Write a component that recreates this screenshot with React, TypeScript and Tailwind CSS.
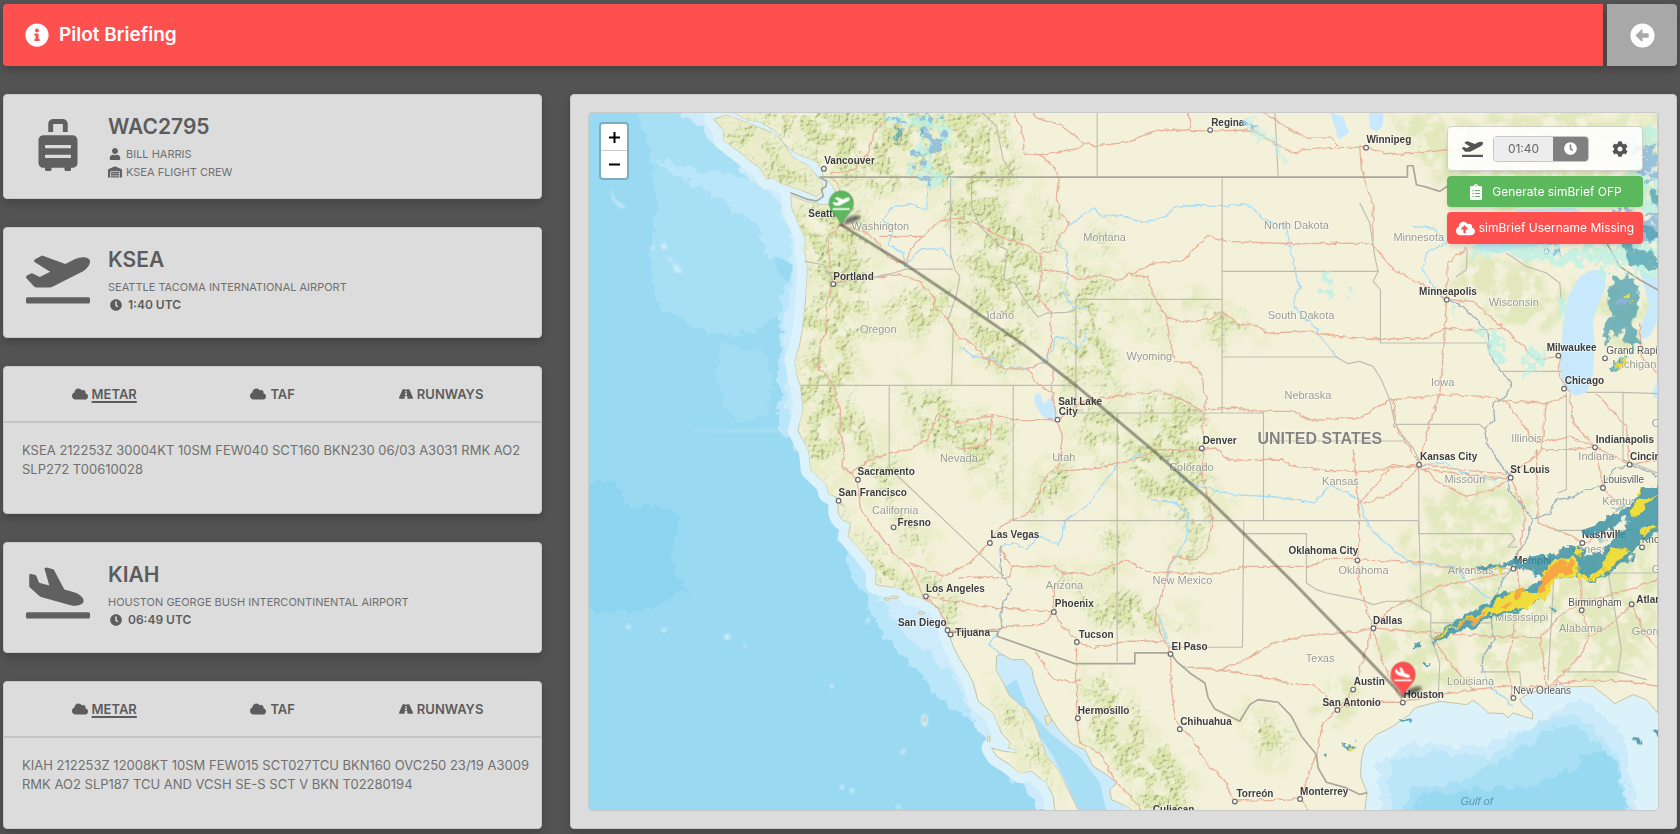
import { useState } from 'react';
import type { ReactNode } from 'react';
import {
  FaArrowAltCircleLeft,
  FaClipboardList,
  FaClock,
  FaCloud,
  FaCloudUploadAlt,
  FaCog,
  FaInfoCircle,
  FaPlaneArrival,
  FaPlaneDeparture,
  FaRoad,
  FaSuitcaseRolling,
  FaUser,
  FaWarehouse,
} from 'react-icons/fa';

// Map drawing units: three to a pixel, window below.
const MAP_VIEW = '87 67 3207 2097';

const LAND =
  'M520 67L560 90 600 96 655 130 670 160 700 185 730 200 770 215 785 240 792 262 815 285 832 315 822 345 790 345 740 336 693 318 697 360 715 400 738 450 732 478 742 520 742 560 736 640 728 720 718 770 705 812 712 860 722 890 730 960 714 1022 745 1080 750 1110 752 1140 800 1185 805 1210 832 1225 858 1255 835 1240 835 1270 848 1292 872 1300 865 1340 910 1390 947 1440 948 1484 960 1488 1020 1495 1050 1517 1085 1525 1130 1550 1155 1590 1165 1625 1180 1670 1200 1710 1225 1750 1240 1780 1255 1835 1300 1870 1325 1930 1352 1960 1345 1975 1368 1978 1370 1990 1330 1985 1295 1975 1310 2000 1350 2025 1380 2050 1415 2045 1460 2080 1480 2120 1485 2164L1557 2164 1525 2100 1495 2040 1460 2000 1435 1930 1415 1880 1385 1850 1350 1820 1325 1770 1308 1740 1310 1700 1325 1693 1355 1710 1390 1710 1415 1735 1422 1770 1440 1820 1470 1880 1500 1925 1540 1965 1575 1980 1600 2030 1640 2055 1672 2080 1650 2100 1655 2130 1700 2150 1720 2164L2415 2164 2422 2110 2402 2060 2405 2010 2415 1970 2450 1935 2500 1910 2550 1875 2562 1858 2575 1852 2640 1835 2720 1845 2740 1832 2765 1850 2785 1870 2830 1872 2845 1885 2860 1870 2890 1880 2918 1888 2918 1868 2890 1845 2880 1830 2905 1812 2930 1805 2990 1790 2992 1770 3010 1792 3100 1790 3140 1820 3165 1842 3220 1815 3260 1830 3294 1870V67Z';
const ISLAND =
  'M462 88L500 76 560 98 640 130 668 155 700 205 745 228 785 275 790 300 770 320 715 298 662 280 640 265 620 268 600 235 560 205 530 180 490 150 492 125Z';
const LAKES = [
  'M3060 560L3100 540 3140 545 3135 600 3110 660 3098 700 3105 760 3100 850 3082 908 3045 920 3008 892 3000 830 3006 760 3010 700 3025 620Z',
  'M2730 475L2800 440 2870 360 3040 355 3180 420 3160 465 3000 460 2860 478 2820 492Z',
  'M2428 67H2472L2468 110 2450 125 2430 115Z',
  'M2310 67L2350 80 2368 130 2335 150 2325 110Z',
  'M3240 540L3294 570V690L3270 740 3245 750 3243 710 3268 650Z',
  'M1424 915L1440 910 1452 945 1468 925 1482 930 1492 982 1470 996 1444 975 1424 940Z',
  'M3294 870L3278 910 3284 925 3294 925Z',
];

// High forest and range areas, drawn through the relief filter.
const RANGES = [
  'M520 60L820 60 1350 60 1350 180 1380 260 1330 330 1380 420 1450 500 1470 600 1450 660 1390 640 1340 560 1310 640 1270 740 1220 700 1230 540 1160 400 1120 260 1060 250 990 330 940 300 860 290 780 220 640 110Z',
  'M465 85L560 100 690 210 780 310 660 275 560 205Z',
  'M690 320L800 360 920 380 940 480 910 600 930 720 880 800 860 900 800 970 710 960 715 860 740 700 760 600 735 500Z',
  'M720 880L850 930 930 1010 1010 1100 990 1220 900 1120 840 1060 820 1200 745 1130Z',
  'M965 1170L1040 1240 1120 1380 1100 1430 1030 1350Z',
  'M840 1240L940 1380 1040 1440 1070 1520 950 1490 890 1360Z',
  'M1040 1440L1160 1500 1200 1620 1120 1550Z',
  'M960 660L1060 600 1180 600 1150 700 1040 740Z',
  'M1230 560L1340 570 1410 680 1430 780 1330 860 1230 780Z',
  'M1540 600L1630 600 1660 700 1640 780 1700 920 1640 910 1590 840 1590 980 1530 960 1500 760 1540 700Z',
  'M1700 590L1790 640 1830 730 1790 780 1740 680Z',
  'M1930 640L2030 670 2050 720 2010 790 1950 720Z',
  'M1760 940L1880 900 1930 1010 1940 1130 1970 1200 1950 1330 1900 1420 1850 1400 1860 1290 1780 1260 1690 1200 1690 1060Z',
  'M1550 990L1680 970 1720 1060 1600 1110Z',
  'M1390 1250L1470 1150 1520 1090 1510 1210 1420 1290Z',
  'M1480 1440L1620 1490 1730 1520 1800 1600 1700 1640 1600 1590Z',
  'M1870 1530L1910 1550 1910 1630 1860 1630Z',
  'M1580 1740L1700 1810 1770 1950 1860 2000 1910 2170 1750 2170 1660 2010 1600 1930Z',
  'M2070 1880L2160 1890 2180 2010 2110 2010Z',
  'M1590 420L1660 410 1650 480 1580 470Z',
  'M1300 1780L1340 1840 1400 1910 1450 2000 1500 2120 1430 2050 1370 1970 1320 1880Z',
  'M1440 300L1480 360 1480 480 1420 440Z',
  'M1480 600L1560 520 1700 600 1560 640Z',
  'M1650 1290L1700 1300 1690 1440 1630 1430Z',
  'M1040 880L1100 920 1340 1000 1340 1250 1200 1100 1060 1020Z',
];
const FORESTS = [
  'M2480 67L3294 67 3294 300 3160 330 2800 340 2660 290 2560 260Z',
  'M2700 530L2900 500 3000 560 3000 690 2920 760 2820 700 2700 640Z',
  'M3120 660L3180 600 3260 640 3240 780 3130 760Z',
  'M2620 1210L2800 1170 2880 1230 2870 1330 2700 1330 2580 1260Z',
  'M2560 1330L2840 1360 2820 1500 2760 1620 2600 1680 2560 1500Z',
  'M2820 1500L2990 1450 3180 1350 3294 1320 3294 1680 3180 1760 2960 1750 2780 1740 2760 1600Z',
  'M2480 1600L2620 1640 2740 1760 2620 1820 2520 1740Z',
  'M2260 1810L2420 1780 2440 1840 2260 1860Z',
  'M1800 600L1900 590 1960 660 1860 650Z',
];

const BORDERS = [
  'M1172 262V490L1185 540 1200 560 1188 620 1165 690 1180 720 1175 887',
  'M735 515L790 525 812 560 820 582 870 572 945 562 1000 550 1040 538H1178',
  'M722 887H1550M988 887V1135L1325 1455M1360 887V1293M1672 970V1715',
  'M1548 970V629H1987M1548 970H2110M1987 262V970M1612 67V258M2145 67L2155 258',
  'M1987 545H2455M1987 802H2330L2365 822 2400 815 2440 830 2465 870 2490 930 2505 1000 2530 1040 2560 1075 2577 1110V1332',
  'M2111 970V1293M2111 1054H2530M1360 1293H2577L2585 1555 2613 1570V1640L2640 1720 2635 1830',
  'M2052 1293L2048 1673H1832M2052 1332H2240V1480L2270 1500 2300 1510 2340 1518 2400 1530 2440 1545 2480 1535 2550 1535 2590 1555',
  'M2577 1332H2855L2865 1350 2845 1372H2872M2613 1600H2790M2765 1747H2880L2885 1800',
  'M2400 340L2430 400 2445 500 2455 545 2440 575 2462 600V760H2785M2830 845H3005M3020 910V1200L2995 1210M3190 908V1110L3294 1150M3080 908H3190L3294 912M2510 1004H2760L2775 1018',
  'M2983 1390V1450L2965 1770M3145 1450L3165 1560 3185 1680 3175 1747M3015 1747H3175L3260 1770M2920 1450H3294M2985 1322H3200L3294 1315',
  'M1235 265V350L1260 410 1320 470 1342 480 1332 570 1365 580 1400 640 1435 682 1460 670 1520 668 1548 660M1265 67L1310 110 1330 210 1360 258',
  'M2690 560L2720 540 2722 480M2840 490L2900 530 2960 550 3000 580 3005 630',
];
const RIVER_BORDERS = [
  'M2660 630L2710 650 2750 690 2785 730 2790 790 2810 830 2855 880 2840 920 2800 940 2805 990 2775 1020 2780 1060 2820 1120 2850 1160 2845 1200 2890 1250 2918 1290 2905 1340 2880 1385 2855 1430 2820 1490 2800 1540 2795 1600 2803 1650 2770 1700 2765 1747',
  'M2918 1290L2970 1270 2990 1230 3040 1222 3080 1200 3130 1190 3160 1140 3220 1125 3294 1160',
  'M1320 1370L1325 1450 1355 1500 1330 1540 1320 1580 1330 1610 1315 1625',
];
const FRONTIERS = [
  'M780 262L800 275 798 290 785 298 790 320 770 334 740 328 693 310M780 262H2543V228L2560 228 2570 285 2600 292 2640 305 2665 288',
  'M1165 1632L1200 1625H1315L1312 1640 1545 1722H1725V1690H1832L1850 1715 1890 1750 1935 1780 1945 1825 1965 1858 2040 1895 2055 1870 2070 1845 2095 1830 2155 1838 2195 1880 2225 1940 2270 1995 2275 2035 2300 2078 2360 2095 2400 2115 2420 2110',
  'M3130 440L3180 530 3240 570 3294 600',
];
const ROADS = [
  'M815 262L840 300 848 405 805 440 805 500 818 580 800 640 798 730 780 760 778 840 800 855 822 890 828 930 842 960 840 1020 850 1080 850 1130 870 1150 895 1170 900 1250 930 1300 1010 1400 1050 1430 1090 1520 1140 1560 1165 1625',
  'M815 252L880 242 925 190 940 140 965 100 985 90',
  'M848 405L920 430 955 460 990 510 1040 520 1050 480 1090 438 1145 390 1200 385 1250 400 1320 440 1380 460 1440 490 1490 485 1490 450 1530 405 1500 370 1492 330 1498 270 1480 230 1440 195 1395 190 1385 120 1362 67',
  'M960 440H1090M820 580L945 562 1020 555 1080 575 1120 620 1125 650 1165 690 1200 750 1230 755 1270 800 1340 838 1400 838 1460 815 1475 760 1472 670 1435 620 1445 540 1440 490',
  'M1440 195L1560 175 1572 160 1500 105 1425 80 1420 67M1572 160L1610 168 1700 158 1780 125 1830 120 1955 124 2080 120 2100 135 2195 188 2260 175 2400 172 2420 175 2500 195 2600 188 2660 180M1892 124V90L1880 67M2110 67L2160 100 2240 145 2320 145 2335 165',
  'M1445 540L1520 548 1555 570 1620 555 1670 573 1780 520 1870 512 1900 480 1945 437 2000 455 2200 462 2400 460 2440 465 2500 540 2560 570 2620 600 2660 630 2740 635 2790 680 2850 730 2900 780 2930 810 3000 800 2995 850 3030 910',
  'M1715 555L1765 562 1785 630 1820 680 1870 698 1950 690 1985 668 2040 705 2090 708 2130 730 2240 725 2330 740 2400 745 2500 748 2600 745 2660 715 2730 722 2830 715M1820 685L1830 750 1845 815 1890 820 1925 850 1928 900 1940 920 1930 1000 1928 1160 1960 1290 1940 1380 1912 1410 1840 1400 1800 1530 1785 1590 1805 1630 1832 1690 1835 1800 1845 1880 1860 1915 1900 1950 1940 2020 2000 2080 2020 2135 2120 2130 2220 2128',
  'M1200 1078L1260 1070 1290 1050 1300 975 1360 990 1495 990 1560 940 1600 930 1700 915 1800 905 1860 925 1920 962 2020 955 2110 965 2200 965 2260 995 2340 985 2400 985 2450 950 2500 930 2640 915 2780 920 2850 935 2960 940 3020 920',
  'M870 1150L930 1110 990 1092 1050 1080 1100 1050 1135 970 1170 990 1200 1000 1300 975',
  'M1480 840L1475 900 1492 990 1510 1050 1495 1130 1450 1170 1440 1210 1410 1270 1320 1310 1290 1360 1230 1420 1150 1460 1050 1420M1400 838L1440 890 1480 910M1500 1145L1620 1135 1670 1120 1720 1110 1800 1080 1925 1080 1970 1075 2005 1112 2170 1108 2190 1128 2300 1142 2420 1145 2578 1125 2700 1140 2850 1155 2950 1080 3030 1080 3106 1072 3210 1125 3294 1110',
  'M1200 1465L1260 1462 1350 1465 1355 1432 1480 1430 1510 1450 1600 1455 1700 1410 1760 1445 1840 1450 1980 1450 2060 1430 2250 1430 2300 1408 2394 1410 2600 1420 2700 1440 2860 1435 2960 1440 3120 1330 3180 1250 3130 1195',
  'M1320 1370L1355 1432M1085 1520L1200 1535 1260 1550 1440 1565 1482 1566 1510 1610 1560 1660 1600 1675 1700 1655 1810 1655M1482 1566L1480 1500 1510 1460M1165 1625L1280 1622 1400 1605 1450 1605 1482 1566M1550 1660L1550 1880 1560 1960 1620 1990 1670 2080 1720 2130 1745 2164M1430 1690L1475 1765 1540 1780 1560 1770',
  'M1870 1730L1980 1742 2060 1710 2140 1660 2240 1638 2400 1625 2440 1615 2500 1550 2580 1520 2640 1490 2840 1450M1980 1742L2100 1760 2200 1785 2260 1785 2300 1820 2333 1860 2290 1900 2270 1990 2220 2128 2250 2164M2333 1860L2380 1800 2400 1740 2440 1615 2550 1625 2680 1632 2800 1640 2940 1645 3000 1580 3060 1540 3180 1510 3294 1470',
  'M2333 1860L2400 1838 2529 1838 2640 1815 2740 1800 2830 1790 2860 1795 2960 1790 3080 1770 3200 1775 3294 1790M2440 1615L2470 1720 2500 1780 2529 1838M2613 1640L2680 1730 2740 1800M2860 1650L2840 1720 2860 1825M3065 1560L3090 1640 3060 1700 2980 1780M2940 1645L2960 1790',
  'M2578 1125L2640 1180 2720 1220 2800 1200 2853 1165 2890 1250 2895 1300 2870 1430 2880 1500 2860 1640M2930 1080L2935 1300 3040 1340 3068 1360 3060 1450 3066 1560M2853 1165L2760 1160 2500 1125 2400 1240M2380 1080L2400 1280 2394 1410 2400 1500 2440 1615',
  'M2400 172L2405 240 2440 350 2440 450M2660 630L2665 520 2720 475M2660 630L2655 740 2640 915 2610 1000 2578 1125M3030 910L3040 1000 3106 1072M3110 910L3200 1010 3210 1125M3240 700L3245 800 3294 850M2960 940L2945 1080M3106 1072L3130 1195M2835 930L2930 1060 3030 1040 3106 1072',
  'M2500 930L2505 1010 2560 1090 2578 1125M3216 1544L3260 1640 3294 1680M3216 1544L3160 1600 3090 1640M2415 1240L2500 1210 2580 1130',
];
const RIVERS = [
  'M1530 405L1600 355 1625 380 1680 375 1750 398 1820 380 1845 350 1900 348 1990 350 2050 342 2080 355 2110 390 2180 410 2190 460 2205 540 2220 590 2200 650 2240 690 2275 720 2280 740 2330 800',
  'M1490 450L1520 490 1525 550 1510 610 1540 650 1580 655M1200 770L1240 800 1310 810 1340 838 1430 830 1480 780 1485 740 1520 745 1555 780 1580 730',
  'M970 390L1000 350 1060 345 1100 360 1105 280M970 390L1000 420 985 465 1030 490 1035 530 1080 480 1145 475 1175 510',
  'M1750 1090L1680 1120 1640 1170 1580 1250 1520 1290 1495 1365 1440 1340 1400 1380 1360 1360 1320 1370M1775 1230L1850 1240 1882 1270 1880 1350 1840 1410 1810 1500 1790 1560 1832 1680',
  'M1840 1130L1880 1175 1960 1200 2020 1215 2150 1222 2265 1240 2310 1185 2400 1230 2425 1310 2500 1380 2560 1425 2680 1430 2730 1480 2790 1530',
  'M2578 1125L2660 1120 2710 1150 2790 1170 2850 1160M2560 410L2620 415 2660 460 2600 490 2590 540 2620 590 2660 630M1315 1625L1288 1665 1325 1695M2770 1747L2800 1800 2860 1850',
];

const CITIES = [
  { name: 'Vancouver', x: 793, y: 223, dx: 792, dy: 237 },
  { name: 'Seattle', x: 745, y: 381 },
  { name: 'Portland', x: 820, y: 570, dx: 820, dy: 583 },
  { name: 'Sacramento', x: 893, y: 1156, dx: 894, dy: 1170 },
  { name: 'San Francisco', x: 836, y: 1219, dx: 836, dy: 1233 },
  { name: 'Fresno', x: 1013, y: 1308, dx: 1001, dy: 1313 },
  { name: 'Los Angeles', x: 1098, y: 1506, dx: 1098, dy: 1520 },
  { name: 'San Diego', x: 1014, y: 1608, dx: 1163, dy: 1622 },
  { name: 'Tijuana', x: 1186, y: 1639, dx: 1172, dy: 1635 },
  { name: 'Las Vegas', x: 1292, y: 1346, dx: 1290, dy: 1360 },
  { name: 'Phoenix', x: 1485, y: 1553, dx: 1482, dy: 1567 },
  { name: 'Tucson', x: 1557, y: 1644, dx: 1551, dy: 1657 },
  { name: 'El Paso', x: 1835, y: 1680, dx: 1832, dy: 1693 },
  { name: 'Hermosillo', x: 1554, y: 1872, dx: 1554, dy: 1886 },
  { name: 'Chihuahua', x: 1861, y: 1906, dx: 1860, dy: 1919 },
  { name: 'Torreón', x: 2030, y: 2123, dx: 2025, dy: 2136 },
  { name: 'Monterrey', x: 2221, y: 2115, dx: 2221, dy: 2128 },
  { name: 'Culiacan', x: 1779, y: 2171 },
  { name: 'Regina', x: 1954, y: 108, dx: 1951, dy: 121 },
  { name: 'Salt Lake', x: 1495, y: 947 },
  { name: 'City', x: 1497, y: 977, dx: 1493, dy: 990 },
  { name: 'Denver', x: 1929, y: 1063, dx: 1926, dy: 1076 },
  { name: 'Oklahoma City', x: 2186, y: 1393, dx: 2393, dy: 1412 },
  { name: 'Winnipeg', x: 2420, y: 161, dx: 2419, dy: 174 },
  { name: 'Minneapolis', x: 2578, y: 617, dx: 2661, dy: 630 },
  { name: 'Milwaukee', x: 2961, y: 784, dx: 2996, dy: 798 },
  { name: 'Chicago', x: 3015, y: 884, dx: 3013, dy: 897 },
  { name: 'Indianapolis', x: 3108, y: 1060, dx: 3106, dy: 1073 },
  { name: 'Cincinnati', x: 3211, y: 1112, dx: 3210, dy: 1125 },
  { name: 'Kansas City', x: 2581, y: 1112, dx: 2578, dy: 1125 },
  { name: 'St Louis', x: 2852, y: 1151, dx: 2853, dy: 1164 },
  { name: 'Nashville', x: 3067, y: 1346, dx: 3068, dy: 1360 },
  { name: 'Memphis', x: 2863, y: 1423, dx: 2861, dy: 1437 },
  { name: 'Dallas', x: 2440, y: 1603, dx: 2441, dy: 1616 },
  { name: 'Atlanta', x: 3230, y: 1540, dx: 3216, dy: 1544 },
  { name: 'Austin', x: 2382, y: 1787, dx: 2380, dy: 1800 },
  { name: 'San Antonio', x: 2288, y: 1848, dx: 2333, dy: 1861 },
  { name: 'Houston', x: 2531, y: 1826, dx: 2529, dy: 1839 },
];
const TOWNS = [
  { name: 'Grand Rapids', x: 3140, y: 793, dx: 3136, dy: 806 },
  { name: 'Louisville', x: 3130, y: 1181, dx: 3130, dy: 1195 },
  { name: 'Knoxville', x: 3246, y: 1360, dx: 3247, dy: 1373 },
  { name: 'Birmingham', x: 3026, y: 1548, dx: 3066, dy: 1562 },
  { name: 'New Orleans', x: 2861, y: 1812, dx: 2861, dy: 1825 },
];
const STATES = [
  { name: 'Washington', x: 875, y: 422 },
  { name: 'Oregon', x: 900, y: 730 },
  { name: 'Idaho', x: 1280, y: 687 },
  { name: 'Montana', x: 1570, y: 453 },
  { name: 'Wyoming', x: 1700, y: 811 },
  { name: 'North Dakota', x: 2113, y: 417 },
  { name: 'South Dakota', x: 2124, y: 687 },
  { name: 'Nebraska', x: 2174, y: 929 },
  { name: 'Nevada', x: 1140, y: 1118 },
  { name: 'Utah', x: 1477, y: 1113 },
  { name: 'Colorado', x: 1828, y: 1143 },
  { name: 'Kansas', x: 2287, y: 1187 },
  { name: 'California', x: 936, y: 1273 },
  { name: 'Arizona', x: 1458, y: 1499 },
  { name: 'New Mexico', x: 1778, y: 1483 },
  { name: 'Oklahoma', x: 2336, y: 1452 },
  { name: 'Texas', x: 2238, y: 1717 },
  { name: 'Minnesota', x: 2501, y: 455 },
  { name: 'Wisconsin', x: 2787, y: 648 },
  { name: 'Iowa', x: 2614, y: 890 },
  { name: 'Michigan', x: 3158, y: 835 },
  { name: 'Illinois', x: 2855, y: 1058 },
  { name: 'Indiana', x: 3056, y: 1111 },
  { name: 'Ohio', x: 3276, y: 1013 },
  { name: 'Missouri', x: 2654, y: 1179 },
  { name: 'Kentucky', x: 3128, y: 1245 },
  { name: 'Tennessee', x: 3020, y: 1391 },
  { name: 'Arkansas', x: 2664, y: 1452 },
  { name: 'Mississippi', x: 2806, y: 1593 },
  { name: 'Alabama', x: 2998, y: 1626 },
  { name: 'Georgia', x: 3216, y: 1637 },
  { name: 'Louisiana', x: 2662, y: 1785 },
  { name: 'Great', x: 3276, y: 1450 },
];

interface LabelProps {
  name: string;
  x: number;
  y: number;
  dx?: number;
  dy?: number;
}

function CityLabel({ name, x, y, dx, dy, bold }: LabelProps & { bold?: boolean }) {
  return (
    <g>
      {dx !== undefined && <circle cx={dx} cy={dy} r="7" fill="#fff" stroke="#666" strokeWidth="3.5" />}
      <text
        x={x}
        y={y}
        fontSize="30"
        fontWeight={bold ? 700 : 400}
        fill={bold ? '#3c3c3c' : '#555'}
        stroke="#fff"
        strokeOpacity="0.55"
        strokeWidth="5"
        paintOrder="stroke"
      >
        {name}
      </text>
    </g>
  );
}

function Pin({ x, y, color, children }: { x: number; y: number; color: string; children: ReactNode }) {
  return (
    <g>
      <path d={`M${x} ${y}L${x + 18} ${y - 22}Q${x + 50} ${y - 36} ${x + 58} ${y - 24}Q${x + 50} ${y - 8} ${x} ${y}Z`} fill="#000" opacity="0.55" filter="url(#soft)" />
      <path
        d={`M${x} ${y}C${x - 8} ${y - 25} ${x - 37} ${y - 38} ${x - 37} ${y - 66}a37 37 0 0 1 74 0C${x + 37} ${y - 38} ${x + 8} ${y - 25} ${x} ${y}Z`}
        fill={color}
        stroke="#000"
        strokeOpacity="0.2"
        strokeWidth="2"
      />
      <g color="#fff">{children}</g>
    </g>
  );
}

function Terrain() {
  return (
    <svg
      className="absolute inset-0 h-full w-full"
      viewBox={MAP_VIEW}
      preserveAspectRatio="xMidYMid slice"
      fontFamily='"Liberation Sans", sans-serif'
      strokeLinejoin="round"
      strokeLinecap="round"
      role="img"
      aria-label="Route map KSEA to KIAH"
    >
      <defs>
        <filter id="relief" x="0" y="0" width="3400" height="2300" filterUnits="userSpaceOnUse" colorInterpolationFilters="sRGB">
          <feTurbulence type="fractalNoise" baseFrequency="0.012" numOctaves="4" seed="4" result="n" />
          <feDisplacementMap in="SourceGraphic" in2="n" scale="130" xChannelSelector="R" yChannelSelector="G" result="d" />
          <feGaussianBlur in="d" stdDeviation="14" result="b" />
          <feTurbulence type="fractalNoise" baseFrequency="0.018" numOctaves="4" seed="21" />
          <feColorMatrix values="0 0 0 0 0  0 0 0 0 0  0 0 0 0 0  7 0 0 0 -2.7" result="gaps" />
          <feComposite in="b" in2="gaps" operator="in" result="cover" />
          <feTurbulence type="fractalNoise" baseFrequency="0.08" numOctaves="3" seed="9" result="t" />
          <feDiffuseLighting in="t" surfaceScale="4" diffuseConstant="1.12" lightingColor="#fffef2" result="l">
            <feDistantLight azimuth="225" elevation="64" />
          </feDiffuseLighting>
          <feComposite in="l" in2="cover" operator="in" result="lit" />
          <feBlend in="lit" in2="cover" mode="multiply" />
        </filter>
        <filter id="woods" x="0" y="0" width="3400" height="2300" filterUnits="userSpaceOnUse" colorInterpolationFilters="sRGB">
          <feTurbulence type="fractalNoise" baseFrequency="0.01" numOctaves="5" seed="12" result="n" />
          <feDisplacementMap in="SourceGraphic" in2="n" scale="220" xChannelSelector="R" yChannelSelector="G" result="d" />
          <feGaussianBlur in="d" stdDeviation="10" result="b" />
          <feTurbulence type="fractalNoise" baseFrequency="0.02" numOctaves="4" seed="31" />
          <feColorMatrix values="0 0 0 0 0  0 0 0 0 0  0 0 0 0 0  5 0 0 0 -1.8" result="gaps" />
          <feComposite in="b" in2="gaps" operator="in" />
        </filter>
        <filter id="rough" x="0" y="0" width="3400" height="2300" filterUnits="userSpaceOnUse" colorInterpolationFilters="sRGB">
          <feTurbulence type="fractalNoise" baseFrequency="0.03" numOctaves="3" seed="7" result="n" />
          <feDisplacementMap in="SourceGraphic" in2="n" scale="46" xChannelSelector="R" yChannelSelector="G" />
        </filter>
        <filter id="echo" x="0" y="0" width="3400" height="2300" filterUnits="userSpaceOnUse" colorInterpolationFilters="sRGB">
          <feTurbulence type="fractalNoise" baseFrequency="0.035" numOctaves="3" seed="15" result="n" />
          <feDisplacementMap in="SourceGraphic" in2="n" scale="75" xChannelSelector="R" yChannelSelector="G" result="d" />
          <feColorMatrix in="n" values="0 0 0 0 0  0 0 0 0 0  0 0 0 0 0  0 0 9 0 -3.2" result="gaps" />
          <feComposite in="d" in2="gaps" operator="in" />
        </filter>
        <filter id="jitter" x="0" y="0" width="3400" height="2300" filterUnits="userSpaceOnUse">
          <feTurbulence type="fractalNoise" baseFrequency="0.05" numOctaves="2" seed="2" result="n" />
          <feDisplacementMap in="SourceGraphic" in2="n" scale="14" xChannelSelector="R" yChannelSelector="G" />
        </filter>
        <filter id="soft" x="-50%" y="-50%" width="200%" height="200%">
          <feGaussianBlur stdDeviation="4" />
        </filter>
        <clipPath id="ground">
          <path d={LAND} />
          <path d={ISLAND} />
        </clipPath>
      </defs>

      <rect x="0" y="0" width="3400" height="2300" fill="#9ad9f2" />
      <g filter="url(#rough)">
        <path d="M240 60L460 60 690 330 640 480 700 640 600 720 520 740 420 720 300 660 270 500 290 350 270 200Z" fill="#a7dff5" />
        <path d="M480 760L600 780 640 860 620 980 520 1000 470 860Z" fill="#a3ddf4" />
        <path d="M60 1180L180 1180 200 1240 340 1260 360 1330 330 1400 380 1500 260 1560 140 1570 60 1560Z" fill="#8cd4ef" />
        <path d="M270 210L400 280 520 360 600 420 620 500 700 520 660 620 660 880 660 1030 780 1140 830 1320 880 1460 960 1620 1050 1720 1150 1840 1260 1900 1340 2060 1480 2164 1560 2164 1200 1500 1000 1400 750 1000 740 300Z" fill="#b9e6f8" />
        <path d="M360 60L470 160 570 270 650 330 690 420 700 560 670 700 680 960 740 1060 790 1200 880 1350 960 1530 1040 1640 1180 1750 1260 1930 1400 2100 1440 2164 1560 2164 1250 1600 900 1300 780 1000 780 300 700 60Z" fill="#cdebfa" />
      </g>
      <path d={LAND} fill="none" stroke="#dcf2fb" strokeWidth="60" />
      <path d={ISLAND} fill="#dcf2fb" stroke="#dcf2fb" strokeWidth="60" />
      <path d="M1300 1680L1430 1700 1500 1900 1680 2060 1700 2164 1540 2164 1440 1960 1300 1780Z" fill="#cbebfa" />
      <path d="M1320 1800L1370 1770 1400 1850 1470 1930 1560 2000 1620 2080 1640 2164 1560 2164 1480 2000 1400 1880Z" fill="#a9dff5" />
      <g filter="url(#rough)">
        <path d="M2380 1800H3330V2200H2380Z" fill="#dcf2fb" />
        <path d="M2470 2180L2450 2020 2560 1960 2760 1970 2900 1920 3020 1850 3070 1830 3140 1880 3200 1960 3230 2180Z" fill="#cbebfa" />
        <path d="M2500 2180L2490 2010 2620 1990 2800 2000 2930 1900 3040 1870 3130 1940 3190 2030 3210 2180Z" fill="#bae6f8" />
        <path d="M2530 2180L2560 2090 2700 2080 2860 1990 2980 1910 3030 1900 3120 1960 3190 2040 3200 2180Z" fill="#a8dff5" />
        <path d="M2550 2180L2580 2110 2760 2100 2900 2090 3060 2030 3060 1990 3140 1980 3190 2060 3200 2180Z" fill="#98d9f2" />
      </g>
      <g fill="#dff4fc" opacity="0.8" filter="url(#soft)">
        <circle cx="278" cy="474" r="6" />
        <circle cx="312" cy="470" r="9" />
        <path d="M315 500L335 505 345 545 370 550 355 530Z" />
        <path d="M150 290L165 330 200 355 180 352 158 330Z" />
        <path d="M400 1022L700 1018V1024L400 1025Z" opacity="0.5" />
        <circle cx="205" cy="1611" r="7" />
        <circle cx="312" cy="1621" r="7" />
        <circle cx="502" cy="1642" r="9" />
        <circle cx="555" cy="1668" r="5" />
        <circle cx="816" cy="1789" r="6" />
        <circle cx="846" cy="2093" r="7" />
        <circle cx="877" cy="2103" r="7" />
        <circle cx="1015" cy="2151" r="6" />
        <path d="M1020 1990L1035 1975 1038 1982 1028 1996Z" />
        <path d="M915 1600L930 1575 928 1600Z" />
        <ellipse cx="1094" cy="1892" rx="10" ry="20" />
      </g>

      <path d={LAND} fill="#f4f1db" stroke="#c5c2a5" strokeWidth="3" />
      <path d={ISLAND} fill="#e9ebc8" stroke="#c5c2a5" strokeWidth="3" />
      <g fill="#ece8c4" stroke="#c9c5a8" strokeWidth="3">
        <ellipse cx="981" cy="1528" rx="8" ry="4" />
        <ellipse cx="1003" cy="1523" rx="12" ry="4" />
        <ellipse cx="1084" cy="1570" rx="8" ry="4" />
        <path d="M1388 1858L1400 1855 1418 1890 1405 1895Z" />
        <path d="M1455 1880L1470 1875 1475 1895 1462 1908Z" />
        <ellipse cx="1286" cy="1948" rx="4" ry="10" />
        <ellipse cx="1094" cy="1890" rx="3" ry="9" />
      </g>
      <g clipPath="url(#ground)">
        <g fill="#e0e8bc" filter="url(#woods)">
          {FORESTS.map((d) => (
            <path key={d} d={d} />
          ))}
        </g>
        <g fill="#ebedca" filter="url(#woods)" stroke="#ebedca" strokeWidth="60">
          {RANGES.map((d) => (
            <path key={d} d={d} />
          ))}
        </g>
        <g fill="#dde7b4" filter="url(#relief)">
          {RANGES.map((d) => (
            <path key={d} d={d} />
          ))}
        </g>
      </g>
      <g fill="#c8e9fb">
        {LAKES.map((d) => (
          <path key={d} d={d} />
        ))}
      </g>

      <g fill="none" filter="url(#jitter)">
        <g stroke="#a9dcf5" strokeWidth="4">
          {RIVERS.map((d) => (
            <path key={d} d={d} />
          ))}
        </g>
        <g stroke="#e8b29b" strokeWidth="4">
          {ROADS.map((d) => (
            <path key={d} d={d} />
          ))}
        </g>
        <g stroke="#9fb2bb" strokeWidth="4">
          {RIVER_BORDERS.map((d) => (
            <path key={d} d={d} />
          ))}
        </g>
      </g>
      <g fill="none" stroke="#bfbdb1" strokeWidth="3.5">
        {BORDERS.map((d) => (
          <path key={d} d={d} />
        ))}
      </g>
      <g fill="none" stroke="#a9a69a" strokeWidth="5">
        {FRONTIERS.map((d) => (
          <path key={d} d={d} />
        ))}
      </g>

      <g fill="#999b91">
        {STATES.map((s) => (
          <text
            key={s.name}
            x={s.x}
            y={s.y}
            fontSize="33"
            stroke="#fff"
            strokeOpacity="0.5"
            strokeWidth="5"
            paintOrder="stroke"
          >
            {s.name}
          </text>
        ))}
        <text x="2093" y="1063" fontSize="48" fontWeight="700" fill="#85857f" stroke="#fff" strokeOpacity="0.5" strokeWidth="5" paintOrder="stroke">
          UNITED STATES
        </text>
        <text x="2702" y="2147" fontSize="33" fontStyle="italic" fill="#5d94b8">
          Gulf of
        </text>
      </g>
      {TOWNS.map((c) => (
        <CityLabel key={c.name} {...c} />
      ))}
      {CITIES.map((c) => (
        <CityLabel key={c.name} {...c} bold />
      ))}

      {/* Weather radar */}
      <g filter="url(#echo)">
        <g fill="#b9f0e4" opacity="0.75">
          <path d="M975 70L1150 70 1170 150 1120 190 1140 240 1190 262 1110 300 1040 240 1050 190 1090 160 1060 100 1000 110Z" />
          <path d="M2050 80L2100 80 2110 120 2160 170 2185 220 2160 215 2140 160 2070 140Z" opacity="0.7" />
          <path d="M2290 560L2320 550 2315 600 2340 620 2310 630 2285 600ZM2350 570L2380 580 2395 620 2370 620Z" />
          <path d="M2740 700L2800 730 2840 750 2830 800 2800 830 2780 770Z" />
          <path d="M2920 760L2960 790 2950 840 2880 850 2900 800Z" />
          <path d="M2990 610L3030 640 3020 700 2990 690Z" />
          <path d="M2660 640L2695 650 2680 680Z" />
          <path d="M2730 465L3294 470 3294 560 3180 540 3060 530 2960 520 2850 500 2740 500Z" />
          <path d="M3180 130L3310 110 3310 500 3200 500 3220 300Z" />
        </g>
        <g fill="#86aedb" opacity="0.7">
          <path d="M1060 67L1140 70 1150 90 1100 95ZM1085 110L1145 140 1150 175 1110 185ZM1060 180L1100 200 1090 230 1050 220ZM1070 262L1120 262 1110 285ZM990 80L1030 90 1020 120Z" />
          <path d="M2065 95L2090 90 2090 115 2070 115Z" />
          <path d="M2960 470L3010 480 2990 500ZM3140 380L3220 350 3250 430 3180 450Z" />
          <path d="M3230 170L3310 150V250L3250 280Z" />
          <path d="M3220 380L3300 370 3300 440 3240 460Z" />
        </g>
      </g>
      <g filter="url(#rough)">
        <g fill="#4c9fb0" opacity="0.75">
          <path d="M1000 105L1022 115 1028 145 1005 160 1012 130ZM1080 120L1092 124 1088 138Z" />
          <path d="M3180 440L3240 480 3294 500 3310 520 3260 545 3220 520 3200 500ZM3240 400L3310 420 3310 460 3260 440Z" />
          <path d="M3270 310L3310 300V340L3275 350Z" />
          <path d="M3160 555L3195 560 3235 580 3240 640 3220 700 3235 740 3220 785 3205 765 3190 725 3160 735 3135 765 3125 740 3155 680 3145 620Z" />
          <path d="M3155 838L3195 795 3205 802 3165 845Z" />
        </g>
        <circle cx="3190" cy="635" r="13" fill="#8fb2da" />
        <g fill="#3f95a8" opacity="0.85">
          <path d="M3310 1165L3250 1200 3200 1240 3170 1280 3110 1300 3070 1325 3080 1340 3160 1315 3200 1290 3200 1320 3150 1350 3130 1390 3080 1400 3060 1370 3010 1372 3000 1390 2910 1400 2860 1420 2760 1424 2765 1440 2870 1430 2920 1450 2950 1470 2900 1500 2820 1510 2760 1550 2700 1585 2650 1620 2605 1660 2640 1650 2710 1620 2780 1585 2880 1570 2950 1520 2990 1470 3060 1460 3110 1480 3150 1450 3200 1410 3250 1360 3310 1320Z" />
          <path d="M2560 1665L2580 1650 2590 1660 2570 1670ZM2520 1888L2555 1880 2558 1888 2525 1895ZM2585 1724L2612 1724V1732H2585ZM3215 1955L3245 1945 3240 1965ZM3275 1925L3300 1915V1940ZM2345 1972L2385 1960 2380 1980ZM2290 1992L2300 1992V2002H2290ZM2975 1543H2987V1563Z" />
        </g>
        <g fill="#9fc6c4" opacity="0.8">
          <path d="M3150 1250L3190 1240 3180 1265ZM2880 1535L2910 1528 2900 1545ZM3020 1410L3040 1405 3035 1425ZM3110 1345L3140 1340 3120 1365Z" />
        </g>
        <g fill="#efdc3d">
          <path d="M3215 1245L3240 1222 3260 1228 3310 1212 3250 1256 3230 1290 3212 1290ZM3235 1320L3290 1305 3250 1340ZM3150 1385L3180 1372 3210 1385 3165 1412 3150 1440 3110 1475 3092 1460 3130 1430ZM3042 1370L3062 1380 3068 1398 3050 1390ZM3050 1448L3100 1460 3090 1470 3050 1466ZM2800 1430L2830 1428 2822 1450ZM3225 1205L3250 1200 3240 1212Z" />
          <path d="M2950 1450L2975 1415 3050 1400 3060 1440 3040 1462 2990 1468 2965 1518 2930 1530 2900 1560 2820 1568 2740 1590 2670 1620 2615 1655 2655 1622 2720 1585 2800 1548 2850 1508 2880 1500 2910 1515 2945 1500Z" />
          <path d="M3165 832L3197 800 3200 806 3172 840ZM3195 610H3204V620H3195ZM3207 632H3215V640H3207ZM2372 1968H2384V1978H2372Z" />
        </g>
        <g fill="#f6a743">
          <path d="M2958 1450L2985 1420 3010 1415 3005 1430 3030 1412 3045 1430 3040 1446 3005 1446 2980 1462 2950 1508 2930 1512ZM2865 1512L2890 1495 2895 1515 2865 1530ZM2820 1550L2850 1540 2840 1560ZM2700 1598L2760 1572 2795 1562 2750 1590 2690 1610ZM2618 1648L2642 1634 2652 1638ZM3115 1450L3142 1428 3130 1450Z" />
        </g>
      </g>

      <path
        d="M843 405L1045 530 1200 634 1400 771 1550 889 1785 1087 1950 1232 2052 1332 2200 1478 2400 1684 2529 1820"
        fill="none"
        stroke="#4f5042"
        strokeOpacity="0.55"
        strokeWidth="9"
      />
      <Pin x={844} y={406} color="#5cb85c">
        <FaPlaneDeparture x={818} y={314} size={52} />
      </Pin>
      <Pin x={2530} y={1820} color="#ff5050">
        <FaPlaneArrival x={2504} y={1728} size={52} />
      </Pin>
    </svg>
  );
}

function Card({ className = '', children }: { className?: string; children: ReactNode }) {
  return (
    <section className={`rounded-sm border border-[#c9c9c9] bg-[#dcdcdc] shadow-[0_4px_10px_rgba(0,0,0,0.2)] ${className}`}>
      {children}
    </section>
  );
}

interface AirportProps {
  icon: ReactNode;
  code: string;
  name: string;
  time: string;
}

function AirportCard({ icon, code, name, time }: AirportProps) {
  return (
    <Card className="flex min-h-[111px] items-start gap-4 px-5 pt-[18px]">
      <div className="flex w-[68px] justify-center text-[64px] text-[#606060]">{icon}</div>
      <div>
        <h2 className="text-[21px] leading-7 font-semibold">{code}</h2>
        <p className="mt-1 text-[11px] leading-[18px] text-[#707070]">{name}</p>
        <p className="flex items-center gap-1.5 pl-0.5 text-[12px] leading-[18px] font-semibold">
          <FaClock aria-hidden />
          {time}
        </p>
      </div>
    </Card>
  );
}

const TABS = ['METAR', 'TAF', 'RUNWAYS'] as const;

function WeatherCard({ metar }: { metar: string }) {
  const [tab, setTab] = useState<(typeof TABS)[number]>('METAR');

  return (
    <Card className="min-h-37">
      <div className="grid grid-cols-3 border-b-2 border-[#c4c4c4] px-4 py-[18px]" role="tablist">
        {TABS.map((t) => (
          <button
            key={t}
            type="button"
            role="tab"
            aria-selected={t === tab}
            onClick={() => setTab(t)}
            className="flex items-center justify-center gap-1 text-[13px] leading-[18px] font-semibold"
          >
            {t === 'RUNWAYS' ? <FaRoad className="text-[14px]" aria-hidden /> : <FaCloud className="text-[16px]" aria-hidden />}
            <span className={t === tab ? 'underline decoration-2 underline-offset-2' : ''}>{t}</span>
          </button>
        ))}
      </div>
      <p className="pt-[18px] pr-2 pb-6 pl-[18px] text-[13px] leading-[19px] text-[#707070]">{tab === 'METAR' ? metar : ''}</p>
    </Card>
  );
}

function MapPanel() {
  const [time, setTime] = useState('01:40');

  return (
    <div className="relative h-full overflow-hidden rounded-sm border border-[#c9c9c9] bg-[#9ad9f2]">
      <Terrain />

      <div className="absolute top-[9px] left-2.5 flex w-[30px] flex-col rounded-sm border-2 border-black/20 bg-white bg-clip-padding text-black">
        <button type="button" aria-label="Zoom in" className="flex h-[27px] items-center justify-center border-b border-[#ccc]">
          <svg viewBox="0 0 11 11" className="h-[11px] w-[11px]" aria-hidden>
            <path d="M0 5.5H11M5.5 0V11" stroke="#000" strokeWidth="2" />
          </svg>
        </button>
        <button type="button" aria-label="Zoom out" className="flex h-[27px] items-center justify-center">
          <svg viewBox="0 0 11 11" className="h-[11px] w-[11px]" aria-hidden>
            <path d="M0 5.5H11" stroke="#000" strokeWidth="2" />
          </svg>
        </button>
      </div>

      <div className="absolute top-[13px] right-[15px] flex w-49 flex-col gap-[5px] text-white">
        <div className="flex h-[45px] items-center rounded-sm border border-[#d0d0c8] bg-white/85 pr-3.5 pl-3.5 text-[#555] shadow-md">
          <FaPlaneDeparture className="text-[21px]" aria-hidden />
          <div className="ml-2.5 flex h-[26px] w-24 overflow-hidden rounded-sm border border-[#c8c8c8]">
            <input
              aria-label="Departure time"
              value={time}
              onChange={(e) => setTime(e.target.value)}
              className="min-w-0 flex-1 bg-[#ededed] text-center text-[12px] text-[#666]"
            />
            <button type="button" aria-label="Set departure time" className="flex w-[35px] items-center justify-center bg-[#808080] text-[13px] text-white">
              <FaClock />
            </button>
          </div>
          <button type="button" aria-label="Map settings" className="ml-auto text-[16px]">
            <FaCog />
          </button>
        </div>
        <button type="button" className="flex h-[31px] items-center justify-center gap-2 rounded-sm bg-[#5cb85c] text-[12px] whitespace-nowrap shadow-md">
          <FaClipboardList className="text-[16px]" aria-hidden />
          Generate simBrief OFP
        </button>
        <button type="button" className="flex h-8 items-center justify-center gap-1 rounded-sm bg-[#ff5050] text-[12px] whitespace-nowrap shadow-md">
          <FaCloudUploadAlt className="text-[19px]" aria-hidden />
          simBrief Username Missing
        </button>
      </div>
    </div>
  );
}

export default function App() {
  return (
    <div className='min-h-screen bg-[#535353] px-[3px] pt-1 pb-1 font-[Inter,"Open_Sans",sans-serif] text-[#5c5c5c]'>
      <header className="flex h-[62px] gap-1 text-white">
        <div className="flex flex-1 items-center gap-2.5 rounded-l-sm bg-[#ff5050] pl-[22px] shadow-[0_4px_10px_rgba(0,0,0,0.2)]">
          <FaInfoCircle className="text-[24px]" aria-hidden />
          <h1 className="text-[19px] font-semibold">Pilot Briefing</h1>
        </div>
        <a
          href="#back"
          aria-label="Back"
          className="flex w-[70px] items-center justify-center rounded-r-sm bg-[#a8a8a8] text-[25px] shadow-[0_4px_10px_rgba(0,0,0,0.2)]"
        >
          <FaArrowAltCircleLeft />
        </a>
      </header>

      <main className="mt-7 grid grid-cols-3 gap-7">
        <div className="flex flex-col gap-7">
          <Card className="flex min-h-[105px] items-start gap-4 px-5 pt-[18px]">
            <div className="flex w-[68px] justify-center pt-1.5 text-[52px] text-[#606060]">
              <FaSuitcaseRolling aria-hidden />
            </div>
            <div>
              <h2 className="text-[21px] leading-7 font-semibold">WAC2795</h2>
              <p className="mt-1 flex items-center gap-1 text-[11px] leading-[18px] text-[#707070]">
                <FaUser className="w-3.5 text-[12px] text-[#606060]" aria-hidden />
                BILL HARRIS
              </p>
              <p className="flex items-center gap-1 text-[11px] leading-[18px] text-[#707070]">
                <FaWarehouse className="w-3.5 text-[12px] text-[#606060]" aria-hidden />
                KSEA FLIGHT CREW
              </p>
            </div>
          </Card>
          <AirportCard icon={<FaPlaneDeparture aria-hidden />} code="KSEA" name="SEATTLE TACOMA INTERNATIONAL AIRPORT" time="1:40 UTC" />
          <WeatherCard metar="KSEA 212253Z 30004KT 10SM FEW040 SCT160 BKN230 06/03 A3031 RMK AO2 SLP272 T00610028" />
          <AirportCard
            icon={<FaPlaneArrival aria-hidden />}
            code="KIAH"
            name="HOUSTON GEORGE BUSH INTERCONTINENTAL AIRPORT"
            time="06:49 UTC"
          />
          <WeatherCard metar="KIAH 212253Z 12008KT 10SM FEW015 SCT027TCU BKN160 OVC250 23/19 A3009 RMK AO2 SLP187 TCU AND VCSH SE-S SCT V BKN T02280194" />
        </div>
        <Card className="col-span-2 p-[17px]">
          <MapPanel />
        </Card>
      </main>
    </div>
  );
}
